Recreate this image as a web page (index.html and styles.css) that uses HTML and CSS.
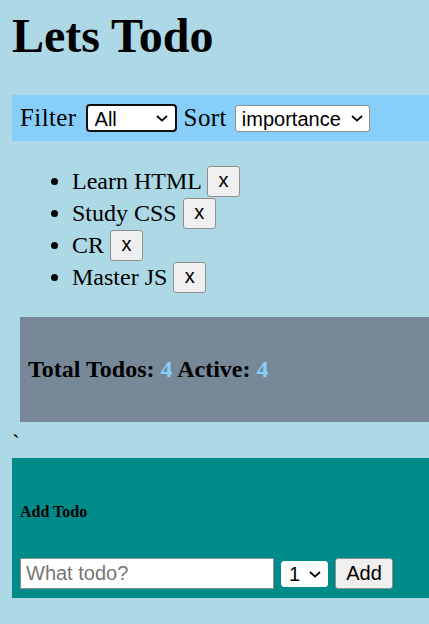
FILE: index.html
```html
<!DOCTYPE html>
<html lang="en">
<head>
<meta charset="utf-8">
<title>Lets Todo</title>
<link rel="stylesheet" href="styles.css">
</head>
<body>
<h1 class="title">Lets Todo</h1>
<div class="toolbar">
  <span class="label">Filter</span>
  <span class="selwrap sw-filter">
    <select class="sel sel-filter">
      <option>All</option>
      <option>Active</option>
      <option>Done</option>
    </select>
    <svg class="chev" width="12" height="7" viewBox="0 0 12 7"><path d="M1 1 L6 5.6 L11 1" fill="none" stroke="#000" stroke-width="1.8"/></svg>
  </span>
  <span class="label label-sort">Sort</span>
  <span class="selwrap sw-sort">
    <select class="sel sel-sort">
      <option>importance</option>
      <option>name</option>
    </select>
    <svg class="chev" width="12" height="7" viewBox="0 0 12 7"><path d="M1 1 L6 5.6 L11 1" fill="none" stroke="#000" stroke-width="1.8"/></svg>
  </span>
</div>
<ul class="todos">
  <li class="todo">Learn HTML <button class="del">x</button></li>
  <li class="todo">Study CSS <button class="del">x</button></li>
  <li class="todo">CR <button class="del">x</button></li>
  <li class="todo">Master JS <button class="del">x</button></li>
</ul>
<div class="stats">
  <h4 class="stats-text">Total Todos: <span class="num">4</span> Active: <span class="num">4</span></h4>
</div>
<div class="tick">`</div>
<div class="add">
  <h6 class="add-title">Add Todo</h6>
  <div class="add-row">
    <input class="add-input" type="text" placeholder="What todo?">
    <span class="selwrap sw-prio">
      <select class="sel sel-prio">
        <option>1</option>
        <option>2</option>
        <option>3</option>
      </select>
      <svg class="chev" width="12" height="7" viewBox="0 0 12 7"><path d="M1 1 L6 5.6 L11 1" fill="none" stroke="#000" stroke-width="1.8"/></svg>
    </span>
    <button class="add-btn">Add</button>
  </div>
</div>
</body>
</html>
```

FILE: styles.css
```css
html {
  background: #add8e6;
}
body {
  margin: 0 0 0 12px;
  font-family: "Liberation Serif", "Times New Roman", serif;
  font-size: 24px;
  color: #000;
}
.title {
  font-size: 48px;
  font-weight: bold;
  margin: 8px 0 32px;
}
.toolbar {
  background: #87cefa;
  height: 46px;
  display: flex;
  align-items: center;
  padding: 0 8px;
}
.label {
  font-size: 25px;
  letter-spacing: 0.4px;
}
.selwrap {
  position: relative;
  display: inline-flex;
}
.chev {
  position: absolute;
  top: 50%;
  margin-top: -3px;
  right: 9px;
  pointer-events: none;
}
.sel {
  -webkit-appearance: none;
  appearance: none;
  font-family: "Liberation Sans", Arial, sans-serif;
  font-size: 20px;
  color: #000;
  background: #fff;
  border: 1px solid #767676;
  border-radius: 3px;
  padding: 1px 0 0 6px;
  margin: 0;
  box-sizing: border-box;
}
.sw-filter {
  margin-left: 9px;
}
.sel-filter {
  width: 91px;
  height: 28px;
  padding-left: 7px;
  border: 2px solid #101010;
  border-radius: 4px;
}
.label-sort {
  margin-left: 7px;
}
.sw-sort {
  margin-left: 8px;
}
.sw-sort .chev {
  right: 7px;
}
.sel-sort {
  width: 135px;
  height: 27px;
  border-color: #8f8f8f;
}
.todos {
  margin: 24px 0;
  padding-left: 60px;
}
.todo {
  line-height: 32px;
  height: 32px;
}
.del {
  vertical-align: top;
  margin-top: 1px;
  width: 33px;
  height: 31px;
  font-family: "Liberation Sans", Arial, sans-serif;
  font-size: 20px;
  line-height: 1;
  padding: 0 0 3px;
  background: #efefef;
  color: #000;
  border: 1px solid #8f8f8f;
  border-radius: 3px;
  box-sizing: border-box;
}
.stats {
  background: #778899;
  margin: 0 0 8px 8px;
  padding: 7px 8px;
}
.stats-text {
  font-size: 24px;
  margin: 32px 0;
}
.num {
  color: #87cefa;
}
.tick {
  height: 27.6px;
}
.add {
  background: #008b8b;
  padding: 8px 8px 9px;
}
.add-title {
  font-size: 16px;
  margin: 37.3px 0;
}
.add-row {
  display: flex;
  align-items: center;
  height: 31px;
}
.add-input {
  width: 254px;
  height: 31px;
  box-sizing: border-box;
  border: 1px solid #8f8f8f;
  padding: 0 5px;
  font-family: "Liberation Sans", Arial, sans-serif;
  font-size: 20px;
  background: #fff;
  margin: 0;
}
.add-input::placeholder {
  color: #757575;
}
.sw-prio {
  margin-left: 7px;
}
.sw-prio .chev {
  right: 7px;
}
.sel-prio {
  width: 47px;
  height: 26px;
  padding-left: 7px;
  border-color: #ffffff;
}
.add-btn {
  width: 58px;
  height: 31px;
  margin-left: 7px;
  box-sizing: border-box;
  font-family: "Liberation Sans", Arial, sans-serif;
  font-size: 20px;
  padding: 0;
  background: #efefef;
  color: #000;
  border: 1px solid #8f8f8f;
  border-radius: 3px;
}
```
